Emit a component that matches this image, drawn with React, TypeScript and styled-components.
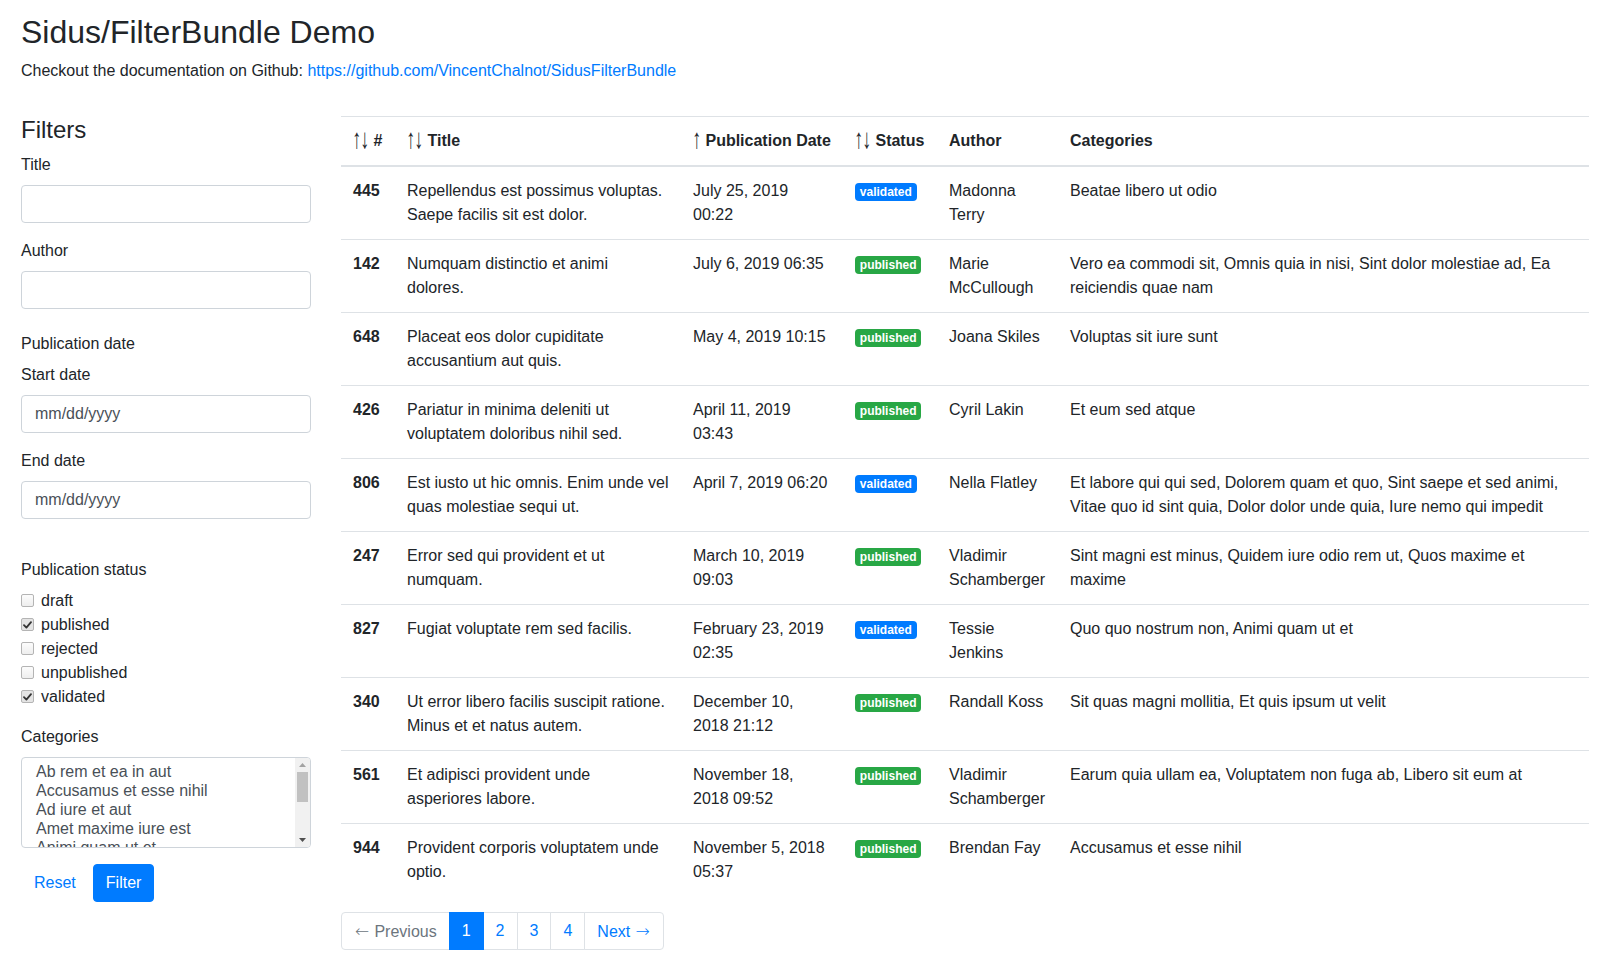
import React from "react";
import styled, { createGlobalStyle } from "styled-components";

const GlobalStyle = createGlobalStyle`
  * { box-sizing: border-box; }
  html, body { margin: 0; padding: 0; background: #fff; }
  body {
    font-family: "Liberation Sans", Arial, sans-serif;
    font-size: 16px;
    line-height: 1.5;
    color: #212529;
  }
`;

const Page = styled.div`
  padding: 13px 23px 40px 21px;
`;

const PageTitle = styled.h1`
  margin: 0 0 8px;
  font-size: 32px;
  font-weight: 500;
  line-height: 1.2;
`;

const Intro = styled.p`
  margin: 0;
`;

const Link = styled.a`
  color: #007bff;
  text-decoration: none;
`;

const Layout = styled.div`
  display: grid;
  grid-template-columns: 290px 1fr;
  column-gap: 30px;
  align-items: start;
  margin-top: 33px;
`;

const Sidebar = styled.form`
  display: flex;
  flex-direction: column;
`;

const SideTitle = styled.h4`
  margin: 0 0 8px;
  font-size: 24px;
  font-weight: 500;
  line-height: 1.2;
`;

const FormGroup = styled.div`
  margin-bottom: 16px;
`;

const FieldSet = styled.fieldset`
  margin: 0 0 16px;
  padding: 0;
  border: 0;
  min-width: 0;
`;

const Legend = styled.legend`
  padding: 7px 0;
  margin: 0;
  font-size: 16px;
  line-height: 1.5;
`;

const Label = styled.label`
  display: block;
  margin-bottom: 8px;
`;

const Input = styled.input`
  display: block;
  width: 100%;
  height: 38px;
  padding: 6px 12px 6px 13px;
  font-family: inherit;
  font-size: 16px;
  line-height: 1.5;
  color: #495057;
  background: #fff;
  border: 1px solid #ced4da;
  border-radius: 4px;
  outline: none;
  &::placeholder { color: #495057; opacity: 1; }
`;

const CheckRow = styled.label`
  display: flex;
  align-items: flex-start;
  height: 24px;
  line-height: 24px;
`;

const Box = styled.span<{ $checked?: boolean }>`
  width: 13px;
  height: 13px;
  margin-top: 5px;
  margin-right: 7px;
  border: 1px solid #b4b4b4;
  border-radius: 2px;
  background: ${(p) => (p.$checked ? "#e4e4e4" : "linear-gradient(#fcfcfc, #eeeeee)")};
  display: flex;
  align-items: center;
  justify-content: center;
  flex: none;
  svg { display: block; }
`;

const ListBox = styled.div`
  display: flex;
  width: 100%;
  height: 91px;
  border: 1px solid #ced4da;
  border-radius: 4px;
  overflow: hidden;
  background: #fff;
`;

const OptionList = styled.ul`
  flex: 1;
  list-style: none;
  margin: 0;
  padding: 5px 0 0 12px;
  overflow: hidden;
`;

const OptionItem = styled.li`
  padding: 0 2px 1px;
  line-height: 18px;
  color: #495057;
  white-space: nowrap;
`;

const ScrollTrack = styled.div`
  width: 15px;
  flex: none;
  background: #f1f1f1;
  display: flex;
  flex-direction: column;
  align-items: center;
`;

const ScrollButton = styled.div`
  height: 14px;
  width: 15px;
  display: flex;
  align-items: center;
  justify-content: center;
  flex: none;
`;

const Thumb = styled.div`
  width: 11px;
  height: 30px;
  background: #c1c1c1;
  flex: none;
`;

const Spacer = styled.div`
  flex: 1;
`;

const Buttons = styled.div`
  display: flex;
  gap: 4px;
`;

const Button = styled.button<{ $primary?: boolean }>`
  height: 38px;
  padding: 6px 12px;
  font-family: inherit;
  font-size: 16px;
  line-height: 1.5;
  white-space: nowrap;
  border: 1px solid ${(p) => (p.$primary ? "#007bff" : "transparent")};
  border-radius: 4px;
  background: ${(p) => (p.$primary ? "#007bff" : "transparent")};
  color: ${(p) => (p.$primary ? "#fff" : "#007bff")};
  cursor: pointer;
`;

const Main = styled.div`
  min-width: 0;
`;

const Table = styled.table`
  width: 100%;
  border-collapse: collapse;
  table-layout: fixed;
  margin-bottom: 16px;
`;

const Th = styled.th`
  padding: 12px;
  text-align: left;
  vertical-align: bottom;
  font-weight: 700;
  border-top: 1px solid #dee2e6;
  border-bottom: 2px solid #dee2e6;
  white-space: nowrap;
`;

const SortArrow = styled.span`
  display: inline-block;
  width: 8px;
  font-weight: 400;
  transform: scale(1.1, 1.75);
  transform-origin: 50% 62%;
`;

const SideArrow = styled.span`
  display: inline-block;
  width: 16px;
  text-align: center;
  font-family: "DejaVu Sans", sans-serif;
  font-weight: 200;
  font-size: 17px;
  line-height: 20px;
`;

const Td = styled.td<{ $bold?: boolean }>`
  padding: 12px;
  vertical-align: top;
  border-top: 1px solid #dee2e6;
  font-weight: ${(p) => (p.$bold ? 700 : 400)};
`;

const Badge = styled.span<{ $status: string }>`
  display: inline-block;
  padding: 3px 4.8px;
  font-size: 12px;
  font-weight: 700;
  line-height: 1;
  color: #fff;
  border-radius: 4px;
  vertical-align: baseline;
  background: ${(p) => (p.$status === "validated" ? "#007bff" : "#28a745")};
`;

const Pager = styled.ul`
  display: flex;
  list-style: none;
  margin: 0;
  padding: 0;
`;

const PageItem = styled.li`
  &:first-child a { margin-left: 0; border-radius: 4px 0 0 4px; }
  &:last-child a { border-radius: 0 4px 4px 0; }
`;

const PageLink = styled.a<{ $active?: boolean; $disabled?: boolean }>`
  display: block;
  height: 38px;
  padding: 8px 12px;
  margin-left: -1px;
  line-height: 20px;
  white-space: nowrap;
  text-decoration: none;
  border: 1px solid ${(p) => (p.$active ? "#007bff" : "#dee2e6")};
  background: ${(p) => (p.$active ? "#007bff" : "#fff")};
  color: ${(p) => (p.$active ? "#fff" : p.$disabled ? "#6c757d" : "#007bff")};
  position: relative;
  z-index: ${(p) => (p.$active ? 1 : 0)};
`;

type Row = {
  id: number;
  title: string;
  date: string;
  status: string;
  author: string;
  categories: string;
};

const rows: Row[] = [
  { id: 445, title: "Repellendus est possimus voluptas. Saepe facilis sit est dolor.", date: "July 25, 2019 00:22", status: "validated", author: "Madonna Terry", categories: "Beatae libero ut odio" },
  { id: 142, title: "Numquam distinctio et animi dolores.", date: "July 6, 2019 06:35", status: "published", author: "Marie McCullough", categories: "Vero ea commodi sit, Omnis quia in nisi, Sint dolor molestiae ad, Ea reiciendis quae nam" },
  { id: 648, title: "Placeat eos dolor cupiditate accusantium aut quis.", date: "May 4, 2019 10:15", status: "published", author: "Joana Skiles", categories: "Voluptas sit iure sunt" },
  { id: 426, title: "Pariatur in minima deleniti ut voluptatem doloribus nihil sed.", date: "April 11, 2019 03:43", status: "published", author: "Cyril Lakin", categories: "Et eum sed atque" },
  { id: 806, title: "Est iusto ut hic omnis. Enim unde vel quas molestiae sequi ut.", date: "April 7, 2019 06:20", status: "validated", author: "Nella Flatley", categories: "Et labore qui qui sed, Dolorem quam et quo, Sint saepe et sed animi, Vitae quo id sint quia, Dolor dolor unde quia, Iure nemo qui impedit" },
  { id: 247, title: "Error sed qui provident et ut numquam.", date: "March 10, 2019 09:03", status: "published", author: "Vladimir Schamberger", categories: "Sint magni est minus, Quidem iure odio rem ut, Quos maxime et maxime" },
  { id: 827, title: "Fugiat voluptate rem sed facilis.", date: "February 23, 2019 02:35", status: "validated", author: "Tessie Jenkins", categories: "Quo quo nostrum non, Animi quam ut et" },
  { id: 340, title: "Ut error libero facilis suscipit ratione. Minus et et natus autem.", date: "December 10, 2018 21:12", status: "published", author: "Randall Koss", categories: "Sit quas magni mollitia, Et quis ipsum ut velit" },
  { id: 561, title: "Et adipisci provident unde asperiores labore.", date: "November 18, 2018 09:52", status: "published", author: "Vladimir Schamberger", categories: "Earum quia ullam ea, Voluptatem non fuga ab, Libero sit eum at" },
  { id: 944, title: "Provident corporis voluptatem unde optio.", date: "November 5, 2018 05:37", status: "published", author: "Brendan Fay", categories: "Accusamus et esse nihil" },
];

const statuses = [
  { name: "draft", checked: false },
  { name: "published", checked: true },
  { name: "rejected", checked: false },
  { name: "unpublished", checked: false },
  { name: "validated", checked: true },
];

const categories = [
  "Ab rem et ea in aut",
  "Accusamus et esse nihil",
  "Ad iure et aut",
  "Amet maxime iure est",
  "Animi quam ut et",
  "Beatae libero ut odio",
];

const colWidths = [54, 286, 162, 94, 121];

function Check({ checked }: { checked: boolean }) {
  return (
    <Box $checked={checked}>
      {checked && (
        <svg width="9" height="8" viewBox="0 0 9 8">
          <path d="M1 4.2 L3.4 6.6 L8 1.2" fill="none" stroke="#333" strokeWidth="1.8" strokeLinecap="round" strokeLinejoin="round" />
        </svg>
      )}
    </Box>
  );
}

function Sort({ both }: { both?: boolean }) {
  return (
    <>
      <SortArrow>↑</SortArrow>
      {both && <SortArrow>↓</SortArrow>}{" "}
    </>
  );
}

function Triangle({ up, color }: { up?: boolean; color: string }) {
  return (
    <svg width="7" height="4" viewBox="0 0 7 4">
      <path d={up ? "M0 4 L3.5 0 L7 4 Z" : "M0 0 L3.5 4 L7 0 Z"} fill={color} />
    </svg>
  );
}

export default function App() {
  return (
    <>
      <GlobalStyle />
      <Page>
        <PageTitle>Sidus/FilterBundle Demo</PageTitle>
        <Intro>
          Checkout the documentation on Github:{" "}
          <Link href="#">https://github.com/VincentChalnot/SidusFilterBundle</Link>
        </Intro>
        <Layout>
          <Sidebar onSubmit={(e) => e.preventDefault()}>
            <SideTitle>Filters</SideTitle>
            <FormGroup>
              <Label>Title</Label>
              <Input type="text" />
            </FormGroup>
            <FormGroup>
              <Label>Author</Label>
              <Input type="text" />
            </FormGroup>
            <FieldSet>
              <Legend>Publication date</Legend>
              <FormGroup>
                <Label>Start date</Label>
                <Input type="text" placeholder="mm/dd/yyyy" />
              </FormGroup>
              <FormGroup>
                <Label>End date</Label>
                <Input type="text" placeholder="mm/dd/yyyy" />
              </FormGroup>
            </FieldSet>
            <FieldSet>
              <Legend>Publication status</Legend>
              {statuses.map((s) => (
                <CheckRow key={s.name}>
                  <Check checked={s.checked} />
                  {s.name}
                </CheckRow>
              ))}
            </FieldSet>
            <FormGroup>
              <Label>Categories</Label>
              <ListBox role="listbox" aria-multiselectable="true">
                <OptionList>
                  {categories.map((c) => (
                    <OptionItem key={c} role="option">
                      {c}
                    </OptionItem>
                  ))}
                </OptionList>
                <ScrollTrack>
                  <ScrollButton>
                    <Triangle up color="#a3a3a3" />
                  </ScrollButton>
                  <Thumb />
                  <Spacer />
                  <ScrollButton>
                    <Triangle color="#505050" />
                  </ScrollButton>
                </ScrollTrack>
              </ListBox>
            </FormGroup>
            <Buttons>
              <Button type="button">Reset</Button>
              <Button type="submit" $primary>
                Filter
              </Button>
            </Buttons>
          </Sidebar>
          <Main>
            <Table>
              <colgroup>
                {colWidths.map((w, i) => (
                  <col key={i} style={{ width: w }} />
                ))}
                <col />
              </colgroup>
              <thead>
                <tr>
                  <Th><Sort both />#</Th>
                  <Th><Sort both />Title</Th>
                  <Th><Sort />Publication Date</Th>
                  <Th><Sort both />Status</Th>
                  <Th>Author</Th>
                  <Th>Categories</Th>
                </tr>
              </thead>
              <tbody>
                {rows.map((r) => (
                  <tr key={r.id}>
                    <Td $bold>{r.id}</Td>
                    <Td>{r.title}</Td>
                    <Td>{r.date}</Td>
                    <Td>
                      <Badge $status={r.status}>{r.status}</Badge>
                    </Td>
                    <Td>{r.author}</Td>
                    <Td>{r.categories}</Td>
                  </tr>
                ))}
              </tbody>
            </Table>
            <Pager>
              <PageItem><PageLink $disabled><SideArrow>←</SideArrow> Previous</PageLink></PageItem>
              <PageItem><PageLink $active href="#">1</PageLink></PageItem>
              <PageItem><PageLink href="#">2</PageLink></PageItem>
              <PageItem><PageLink href="#">3</PageLink></PageItem>
              <PageItem><PageLink href="#">4</PageLink></PageItem>
              <PageItem><PageLink href="#">Next <SideArrow>→</SideArrow></PageLink></PageItem>
            </Pager>
          </Main>
        </Layout>
      </Page>
    </>
  );
}
